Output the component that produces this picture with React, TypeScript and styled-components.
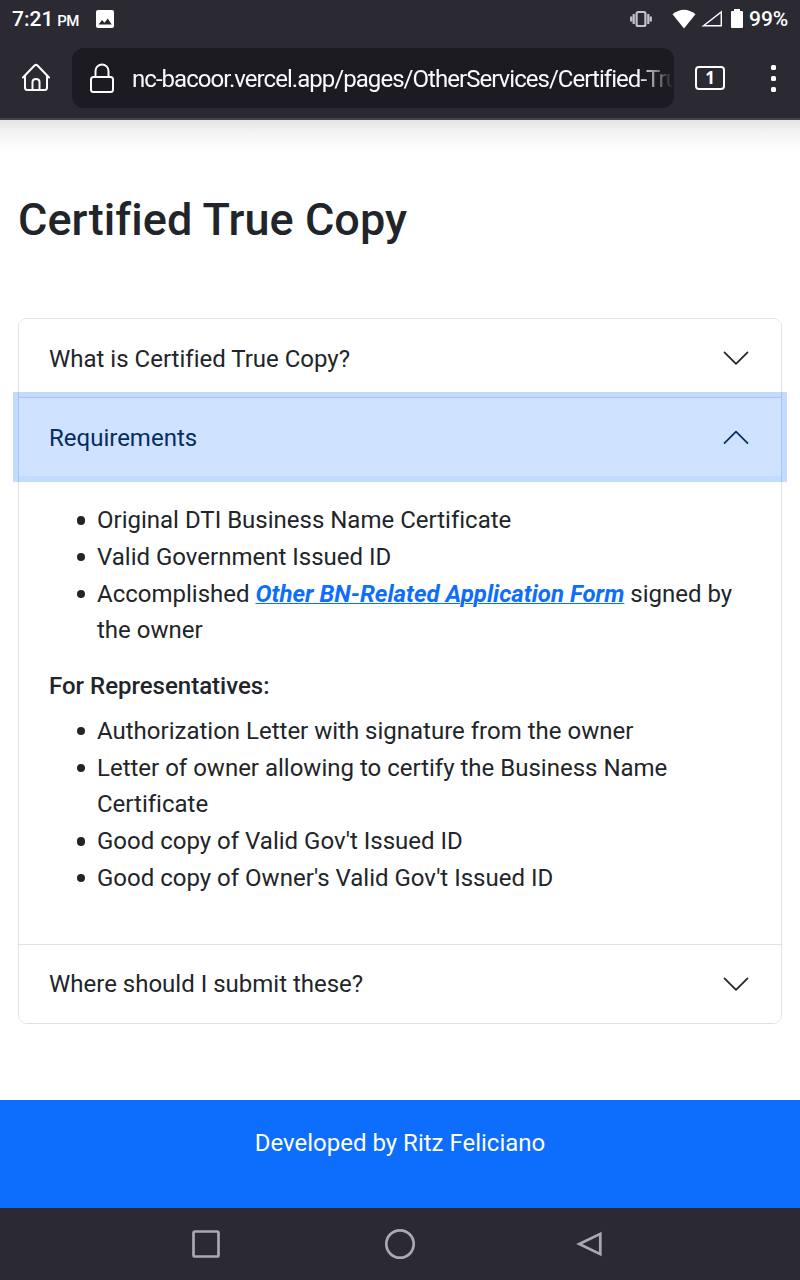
import React, { useState } from "react";
import styled, { createGlobalStyle } from "styled-components";

const GlobalStyle = createGlobalStyle`
  * { box-sizing: border-box; }
  body { margin: 0; background: #fff; font-family: Roboto, "Liberation Sans", sans-serif; color: #212529; font-variant-ligatures: none; }
  svg { display: block; flex: none; }
`;

const Screen = styled.div`
  width: 800px;
  height: 1280px;
  display: flex;
  flex-direction: column;
  overflow: hidden;
`;

const Chrome = styled.header`
  height: 120px;
  background: #2b2a33;
  border-bottom: 2px solid #42414d;
  color: #fff;
`;

const StatusBar = styled.div`
  height: 36px;
  display: flex;
  align-items: center;
  padding: 2px 12px 0;
`;

const Clock = styled.span`
  font-size: 21px;
  font-weight: 500;
  line-height: 24px;
  width: 84px;
  padding-top: 1px;
  white-space: nowrap;
`;

const Meridiem = styled.span`
  font-size: 15px;
  letter-spacing: -0.6px;
  margin-left: 4px;
`;

const StatusIcons = styled.div`
  margin-left: auto;
  display: flex;
  align-items: center;
`;

const Gap = styled.span<{ $w: number }>`
  width: ${(p) => p.$w}px;
`;

const Battery = styled.span`
  font-size: 21px;
  font-weight: 500;
  line-height: 24px;
  width: 39px;
  margin-left: 6px;
  white-space: nowrap;
`;

const Toolbar = styled.div`
  height: 82px;
  display: flex;
  align-items: center;
  padding: 2px 12px 0 20px;
`;

const AddressBar = styled.div`
  width: 602px;
  height: 60px;
  margin: 0 21px 0 20px;
  padding-left: 16px;
  display: flex;
  align-items: center;
  border-radius: 12px;
  background: #1c1b22;
  overflow: hidden;
`;

const Url = styled.span`
  flex: 1;
  min-width: 0;
  margin: 1px 0 0 16px;
  overflow: hidden;
  white-space: nowrap;
  color: #fbfbfe;
  font-size: 24px;
  line-height: 30px;
  letter-spacing: -0.96px;
  mask-image: linear-gradient(to right, #000 calc(100% - 36px), transparent);
`;

const TabCount = styled.div`
  width: 30px;
  height: 24px;
  border: 2px solid #fff;
  border-radius: 4px;
  display: flex;
  align-items: center;
  justify-content: center;
  font: 700 17px/20px "Noto Sans", sans-serif;
`;

const Menu = styled.div`
  display: flex;
  flex-direction: column;
  gap: 6px;
  margin: 0 12px 0 auto;
`;

const Dot = styled.i`
  width: 5px;
  height: 5px;
  border-radius: 1.5px;
  background: #fff;
`;

const Page = styled.main`
  height: 980px;
  padding: 73px 18px 0;
  background: linear-gradient(#e3e3e3, #f3f3f3 12px, #fcfcfc 26px, #fff 36px);
`;

const Title = styled.h1`
  margin: 0 0 71px;
  font-size: 45px;
  font-weight: 500;
  line-height: 54px;
  letter-spacing: 0.06px;
`;

const Accordion = styled.div`
  border: 1px solid #dee2e6;
  border-radius: 9px;
`;

const Item = styled.section`
  & + & { border-top: 1px solid #dee2e6; }
`;

const ItemButton = styled.button<{ $open: boolean }>`
  width: 100%;
  height: 78px;
  display: flex;
  align-items: center;
  justify-content: space-between;
  padding: 2px 32px 0 30px;
  border: 0;
  border-radius: ${(p) => (p.$open ? 0 : "8px")};
  background: ${(p) => (p.$open ? "#cfe2ff" : "#fff")};
  box-shadow: ${(p) => (p.$open ? "0 0 0 6px rgba(13, 110, 253, 0.25)" : "none")};
  position: relative;
  z-index: ${(p) => (p.$open ? 3 : 0)};
  color: ${(p) => (p.$open ? "#052c65" : "#212529")};
  font-family: Roboto, "Liberation Sans", sans-serif;
  font-size: 24px;
  line-height: 36px;
  font-variant-ligatures: none;
`;

const ItemTitle = styled.span<{ $last: boolean }>`
  padding-bottom: ${(p) => (p.$last ? "2px" : 0)};
`;

const ItemBody = styled.div`
  height: 468px;
  padding: 26px 30px 0;
  font-size: 24px;
  line-height: 36.75px;
`;

const List = styled.ul`
  margin: 0;
  padding-left: 48px;
  list-style: none;
`;

const Entry = styled.li`
  &::before {
    content: "";
    float: left;
    width: 8.5px;
    height: 8.5px;
    margin: 14px 0 0 -20.5px;
    border-radius: 50%;
    background: #212529;
  }
`;

const Subheading = styled.p`
  margin: 19px 0 8px;
  font-weight: 500;
`;

const FormLink = styled.a`
  color: #0d6efd;
  font-weight: 700;
  font-style: italic;
  text-decoration: underline;
  text-decoration-thickness: 1px;
`;

const Footer = styled.footer`
  height: 108px;
  padding-top: 25px;
  background: #0d6efd;
  color: #fff;
  text-align: center;
  font-size: 24px;
  line-height: 36px;
`;

const NavBar = styled.nav`
  height: 72px;
  display: flex;
  align-items: center;
  justify-content: space-between;
  padding: 0 196px 0 191px;
  background: #2b2a33;
`;

const Chevron = ({ up }: { up: boolean }) => (
  <svg width="26" height="16" viewBox="0 0 26 16" fill="none" stroke="currentColor" strokeWidth="1.7" strokeLinecap="round" strokeLinejoin="round">
    <path d={up ? "M1.5 13.1 13 1.6l11.5 11.5" : "M1.5 1.4 13 12.9 24.5 1.4"} />
  </svg>
);

const PictureIcon = () => (
  <svg width="18" height="18" viewBox="0 0 18 18">
    <rect width="18" height="18" rx="2" fill="#fff" />
    <path d="M2.5 14.5 6 10l2.500 2.700L11.700 8.500l4 6z" fill="#2b2a33" />
  </svg>
);

const VibrateIcon = () => (
  <svg width="22" height="18" viewBox="0 0 22 18" fill="none" stroke="#c4c4c6" strokeWidth="2.2">
    <rect x="6.600" y="2" width="8.800" height="14" rx="1.500" />
    <path d="M3.700 4v10M18.300 4v10M1.200 6.500v5M20.800 6.500v5" />
  </svg>
);

const WifiIcon = () => (
  <svg width="24" height="20" viewBox="0 0 24 20">
    <path d="M.5 5.200Q12-3.800 23.500 5.200L12 19.500z" fill="#fff" />
  </svg>
);

const SignalIcon = () => (
  <svg width="22" height="18" viewBox="0 0 22 18" fill="none" stroke="#fff" strokeWidth="1.4">
    <path d="M2.500 15.800 20.300 2v13.800z" />
  </svg>
);

const BatteryIcon = () => (
  <svg width="12" height="20" viewBox="0 0 12 20">
    <path d="M1 2h2V0h6v2h2q1 0 1 1v15q0 1-1 1H1q-1 0-1-1V3q0-1 1-1z" fill="#fff" />
  </svg>
);

const HomeIcon = () => (
  <svg width="32" height="32" viewBox="0 0 32 32" fill="none" stroke="#fbfbfe" strokeWidth="2" strokeLinecap="round" strokeLinejoin="round">
    <path d="M3 15.500 14.500 3.500q1.500-1.300 3 0L29 15.500M5 13.500v12q0 2.500 2.500 2.500h17q2.500 0 2.500-2.500v-12" />
    <path d="M12.500 28v-8q0-3 3.500-3t3.500 3v8" />
  </svg>
);

const LockIcon = () => (
  <svg width="28" height="32" viewBox="0 0 28 32" fill="none" stroke="#fbfbfe" strokeWidth="2">
    <rect x="3" y="15" width="22" height="15" rx="2.5" />
    <path d="M7.500 15V9a6.500 6.500 0 0 1 13 0v6" />
  </svg>
);

const requirements = (
  <>
    <List>
      <Entry>Original DTI Business Name Certificate</Entry>
      <Entry>Valid Government Issued ID</Entry>
      <Entry>
        Accomplished <FormLink>Other BN-Related Application Form</FormLink> signed by the owner
      </Entry>
    </List>
    <Subheading>For Representatives:</Subheading>
    <List>
      <Entry>Authorization Letter with signature from the owner</Entry>
      <Entry>Letter of owner allowing to certify the Business Name Certificate</Entry>
      <Entry>Good copy of Valid Gov't Issued ID</Entry>
      <Entry>Good copy of Owner's Valid Gov't Issued ID</Entry>
    </List>
  </>
);

const items = [
  { title: "What is Certified True Copy?", body: null },
  { title: "Requirements", body: requirements },
  { title: "Where should I submit these?", body: null },
];

export default function App() {
  const [open, setOpen] = useState(1);
  return (
    <Screen>
      <GlobalStyle />
      <Chrome>
        <StatusBar>
          <Clock>7:21<Meridiem>PM</Meridiem></Clock>
          <PictureIcon />
          <StatusIcons>
            <VibrateIcon />
            <Gap $w={20} />
            <WifiIcon />
            <Gap $w={5} />
            <SignalIcon />
            <Gap $w={8} />
            <BatteryIcon />
            <Battery>99%</Battery>
          </StatusIcons>
        </StatusBar>
        <Toolbar>
          <HomeIcon />
          <AddressBar>
            <LockIcon />
            <Url>nc-bacoor.vercel.app/pages/OtherServices/Certified-True-Copy</Url>
          </AddressBar>
          <TabCount>1</TabCount>
          <Menu><Dot /><Dot /><Dot /></Menu>
        </Toolbar>
      </Chrome>
      <Page>
        <Title>Certified True Copy</Title>
        <Accordion>
          {items.map((item, i) => (
            <Item key={item.title}>
              <ItemButton $open={open === i} onClick={() => setOpen(open === i ? -1 : i)}>
                <ItemTitle $last={i === items.length - 1}>{item.title}</ItemTitle>
                <Chevron up={open === i} />
              </ItemButton>
              {open === i && item.body && <ItemBody>{item.body}</ItemBody>}
            </Item>
          ))}
        </Accordion>
      </Page>
      <Footer>Developed by Ritz Feliciano</Footer>
      <NavBar>
        <svg width="30" height="30" viewBox="0 0 30 30" fill="none" stroke="#aaa9ad" strokeWidth="2.7">
          <rect x="2.500" y="2.500" width="25" height="25" rx="1.500" />
        </svg>
        <svg width="32" height="32" viewBox="0 0 32 32" fill="none" stroke="#aaa9ad" strokeWidth="2.7">
          <circle cx="17" cy="16" r="13.700" />
        </svg>
        <svg width="28" height="28" viewBox="0 0 28 28" fill="none" stroke="#aaa9ad" strokeWidth="2.7">
          <path d="M3.300 14 24.300 3.800v20.400z" />
        </svg>
      </NavBar>
    </Screen>
  );
}
